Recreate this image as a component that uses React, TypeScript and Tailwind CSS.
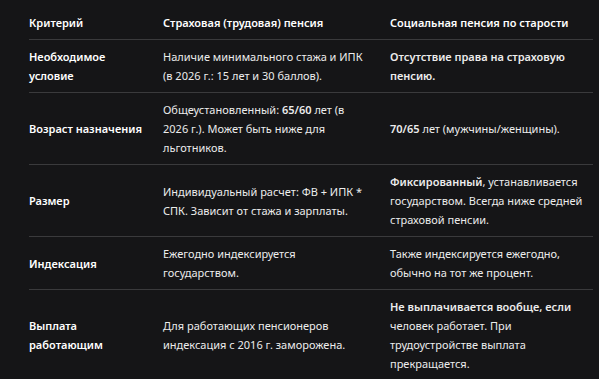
import React from 'react';

type Row = {
  label: string;
  insurance: React.ReactNode;
  social: React.ReactNode;
};

const rows: Row[] = [
  {
    label: 'Необходимое условие',
    insurance: 'Наличие минимального стажа и ИПК (в 2026 г.: 15 лет и 30 баллов).',
    social: <b className="font-semibold">Отсутствие права на страховую пенсию.</b>,
  },
  {
    label: 'Возраст назначения',
    insurance: (
      <>
        Общеустановленный: <b className="font-semibold">65/60</b> лет (в 2026 г.). Может быть ниже для льготников.
      </>
    ),
    social: (
      <>
        <b className="font-semibold">70/65</b> лет (мужчины/женщины).
      </>
    ),
  },
  {
    label: 'Размер',
    insurance: 'Индивидуальный расчет: ФВ + ИПК * СПК. Зависит от стажа и зарплаты.',
    social: (
      <>
        <b className="font-semibold">Фиксированный</b>, устанавливается государством. Всегда ниже средней страховой пенсии.
      </>
    ),
  },
  {
    label: 'Индексация',
    insurance: 'Ежегодно индексируется государством.',
    social: 'Также индексируется ежегодно, обычно на тот же процент.',
  },
  {
    label: 'Выплата работающим',
    insurance: 'Для работающих пенсионеров индексация с 2016 г. заморожена.',
    social: (
      <>
        <b className="font-semibold">Не выплачивается вообще, если</b> человек работает. При трудоустройстве выплата прекращается.
      </>
    ),
  },
];

export default function App() {
  return (
    <div
      className="min-h-screen bg-[#151517] text-[#ececec] text-[11px] leading-[19px] pt-[5px] pl-[29px]"
      style={{ fontFamily: '"Noto Sans", "Open Sans", sans-serif' }}
    >
      <div className="w-[564px]">
        <div className="grid grid-cols-[134px_227px_203px] border-b border-[#3a3a3c] font-semibold text-white">
          <div className="pt-[8px] pb-[7px] pr-4">Критерий</div>
          <div className="pt-[8px] pb-[7px] pr-6">Страховая (трудовая) пенсия</div>
          <div className="pt-[8px] pb-[7px] pr-2">Социальная пенсия по старости</div>
        </div>
        {rows.map((r, i) => (
          <div
            key={i}
            className={`grid grid-cols-[134px_227px_203px] ${i < rows.length - 1 ? 'border-b border-[#3a3a3c]' : ''}`}
          >
            <div className="py-[7px] pr-4 flex items-center font-semibold text-white">{r.label}</div>
            <div className="py-[7px] pr-6 flex items-center">
              <div>{r.insurance}</div>
            </div>
            <div className="py-[7px] pr-2 flex items-center">
              <div>{r.social}</div>
            </div>
          </div>
        ))}
      </div>
    </div>
  );
}
